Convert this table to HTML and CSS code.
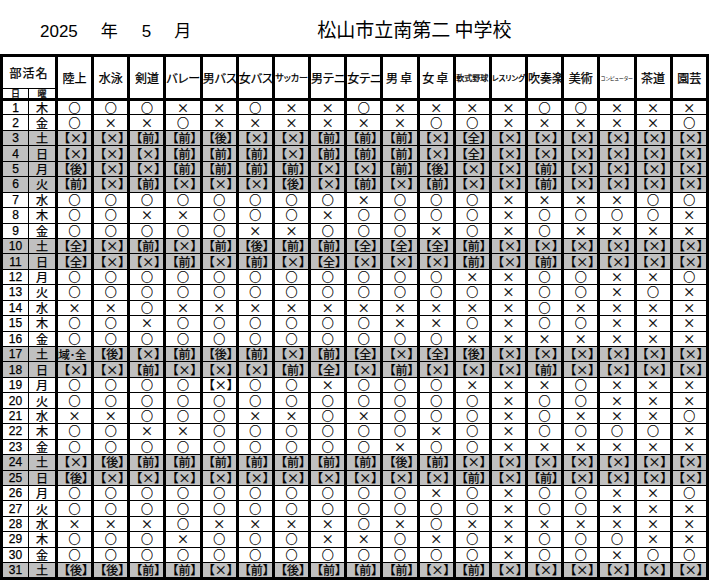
FILE: index.html
```html
<!DOCTYPE html>
<html lang="ja">
<head>
<meta charset="utf-8">
<title>2025年5月 部活動予定表</title>
<link rel="stylesheet" href="styles.css">
</head>
<body>
<div class="title">
  <span class="num">2025</span><span class="kan k1">年</span><span class="num n2">5</span><span class="kan k2">月</span><span class="school">松山市立南第二 中学校</span>
</div>
<table class="sched">
  <colgroup>
    <col class="cd"><col class="cw">
    <col><col><col><col><col><col><col><col><col><col><col><col><col><col><col><col><col><col>
  </colgroup>
  <thead>
    <tr class="h1">
      <th colspan="2" class="bk">部活名</th>
      <th rowspan="2" class="cl">陸上</th>
      <th rowspan="2" class="cl">水泳</th>
      <th rowspan="2" class="cl">剣道</th>
      <th rowspan="2" class="cl">バレー</th>
      <th rowspan="2" class="cl">男バス</th>
      <th rowspan="2" class="cl">女バス</th>
      <th rowspan="2" class="cl s9">サッカー</th>
      <th rowspan="2" class="cl">男テニ</th>
      <th rowspan="2" class="cl">女テニ</th>
      <th rowspan="2" class="cl sp">男卓</th>
      <th rowspan="2" class="cl sp">女卓</th>
      <th rowspan="2" class="cl s8">軟式野球</th>
      <th rowspan="2" class="cl s7">レスリング</th>
      <th rowspan="2" class="cl">吹奏楽</th>
      <th rowspan="2" class="cl">美術</th>
      <th rowspan="2" class="cl s5">コンピューター</th>
      <th rowspan="2" class="cl">茶道</th>
      <th rowspan="2" class="cl">園芸</th>
    </tr>
    <tr class="h2"><th class="sub">日</th><th class="sub">曜</th></tr>
  </thead>
  <tbody>
    <tr><td class="d">1</td><td class="w">木</td><td>○</td><td>○</td><td>○</td><td>×</td><td>×</td><td>○</td><td>×</td><td>×</td><td>○</td><td>×</td><td>×</td><td>×</td><td>×</td><td>○</td><td>○</td><td>×</td><td>×</td><td>×</td></tr>
    <tr><td class="d">2</td><td class="w">金</td><td>○</td><td>×</td><td>×</td><td>○</td><td>×</td><td>×</td><td>×</td><td>×</td><td>×</td><td>×</td><td>○</td><td>○</td><td>×</td><td>×</td><td>×</td><td>×</td><td>×</td><td>○</td></tr>
    <tr class="off"><td class="d">3</td><td class="w">土</td><td>【×】</td><td>【×】</td><td>【前】</td><td>【前】</td><td>【後】</td><td>【×】</td><td>【×】</td><td>【前】</td><td>【前】</td><td>【前】</td><td>【×】</td><td>【全】</td><td>【×】</td><td>【×】</td><td>【×】</td><td>【×】</td><td>【×】</td><td>【×】</td></tr>
    <tr class="off"><td class="d">4</td><td class="w">日</td><td>【×】</td><td>【×】</td><td>【×】</td><td>【前】</td><td>【前】</td><td>【前】</td><td>【×】</td><td>【前】</td><td>【前】</td><td>【前】</td><td>【×】</td><td>【全】</td><td>【×】</td><td>【×】</td><td>【×】</td><td>【×】</td><td>【×】</td><td>【×】</td></tr>
    <tr class="off"><td class="d">5</td><td class="w">月</td><td>【後】</td><td>【×】</td><td>【×】</td><td>【前】</td><td>【前】</td><td>【前】</td><td>【前】</td><td>【×】</td><td>【×】</td><td>【前】</td><td>【後】</td><td>【×】</td><td>【×】</td><td>【前】</td><td>【×】</td><td>【×】</td><td>【×】</td><td>【×】</td></tr>
    <tr class="off"><td class="d">6</td><td class="w">火</td><td>【前】</td><td>【×】</td><td>【前】</td><td>【×】</td><td>【×】</td><td>【×】</td><td>【後】</td><td>【×】</td><td>【前】</td><td>【×】</td><td>【前】</td><td>【×】</td><td>【×】</td><td>【前】</td><td>【×】</td><td>【×】</td><td>【×】</td><td>【×】</td></tr>
    <tr><td class="d">7</td><td class="w">水</td><td>○</td><td>○</td><td>○</td><td>○</td><td>○</td><td>○</td><td>○</td><td>○</td><td>×</td><td>○</td><td>○</td><td>○</td><td>×</td><td>×</td><td>×</td><td>×</td><td>○</td><td>○</td></tr>
    <tr><td class="d">8</td><td class="w">木</td><td>○</td><td>○</td><td>×</td><td>×</td><td>○</td><td>○</td><td>○</td><td>×</td><td>○</td><td>○</td><td>○</td><td>○</td><td>×</td><td>○</td><td>○</td><td>○</td><td>○</td><td>×</td></tr>
    <tr><td class="d">9</td><td class="w">金</td><td>○</td><td>○</td><td>○</td><td>○</td><td>○</td><td>×</td><td>×</td><td>○</td><td>○</td><td>○</td><td>×</td><td>○</td><td>×</td><td>○</td><td>×</td><td>×</td><td>×</td><td>×</td></tr>
    <tr class="off"><td class="d">10</td><td class="w">土</td><td>【全】</td><td>【×】</td><td>【前】</td><td>【×】</td><td>【前】</td><td>【後】</td><td>【前】</td><td>【前】</td><td>【全】</td><td>【全】</td><td>【全】</td><td>【前】</td><td>【×】</td><td>【×】</td><td>【×】</td><td>【×】</td><td>【×】</td><td>【×】</td></tr>
    <tr class="off"><td class="d">11</td><td class="w">日</td><td>【全】</td><td>【×】</td><td>【×】</td><td>【前】</td><td>【×】</td><td>【前】</td><td>【×】</td><td>【全】</td><td>【×】</td><td>【×】</td><td>【×】</td><td>【前】</td><td>【×】</td><td>【前】</td><td>【×】</td><td>【×】</td><td>【×】</td><td>【×】</td></tr>
    <tr><td class="d">12</td><td class="w">月</td><td>○</td><td>○</td><td>○</td><td>○</td><td>○</td><td>○</td><td>○</td><td>○</td><td>○</td><td>○</td><td>○</td><td>×</td><td>×</td><td>○</td><td>○</td><td>×</td><td>×</td><td>○</td></tr>
    <tr><td class="d">13</td><td class="w">火</td><td>○</td><td>○</td><td>○</td><td>○</td><td>○</td><td>○</td><td>○</td><td>○</td><td>○</td><td>○</td><td>○</td><td>○</td><td>×</td><td>○</td><td>○</td><td>×</td><td>○</td><td>×</td></tr>
    <tr><td class="d">14</td><td class="w">水</td><td>×</td><td>×</td><td>○</td><td>×</td><td>×</td><td>×</td><td>×</td><td>×</td><td>×</td><td>×</td><td>×</td><td>×</td><td>×</td><td>○</td><td>×</td><td>×</td><td>×</td><td>×</td></tr>
    <tr><td class="d">15</td><td class="w">木</td><td>○</td><td>○</td><td>×</td><td>○</td><td>○</td><td>○</td><td>○</td><td>○</td><td>○</td><td>×</td><td>×</td><td>○</td><td>×</td><td>○</td><td>○</td><td>×</td><td>×</td><td>×</td></tr>
    <tr><td class="d">16</td><td class="w">金</td><td>○</td><td>○</td><td>○</td><td>○</td><td>○</td><td>○</td><td>○</td><td>○</td><td>○</td><td>○</td><td>○</td><td>×</td><td>×</td><td>×</td><td>×</td><td>×</td><td>×</td><td>×</td></tr>
    <tr class="off"><td class="d">17</td><td class="w">土</td><td class="clip"><div>地域･全</div></td><td>【後】</td><td>【×】</td><td>【前】</td><td>【後】</td><td>【前】</td><td>【×】</td><td>【前】</td><td>【全】</td><td>【×】</td><td>【全】</td><td>【後】</td><td>【×】</td><td>【×】</td><td>【×】</td><td>【×】</td><td>【×】</td><td>【×】</td></tr>
    <tr class="off"><td class="d">18</td><td class="w">日</td><td>【×】</td><td>【×】</td><td>【前】</td><td>【×】</td><td>【×】</td><td>【×】</td><td>【前】</td><td>【全】</td><td>【×】</td><td>【前】</td><td>【×】</td><td>【×】</td><td>【×】</td><td>【前】</td><td>【×】</td><td>【×】</td><td>【×】</td><td>【×】</td></tr>
    <tr><td class="d">19</td><td class="w">月</td><td>○</td><td>○</td><td>○</td><td>○</td><td>【×】</td><td>○</td><td>○</td><td>×</td><td>○</td><td>○</td><td>○</td><td>×</td><td>×</td><td>×</td><td>○</td><td>×</td><td>×</td><td>×</td></tr>
    <tr><td class="d">20</td><td class="w">火</td><td>○</td><td>○</td><td>○</td><td>○</td><td>○</td><td>○</td><td>○</td><td>○</td><td>○</td><td>○</td><td>○</td><td>○</td><td>×</td><td>○</td><td>○</td><td>×</td><td>×</td><td>×</td></tr>
    <tr><td class="d">21</td><td class="w">水</td><td>×</td><td>×</td><td>○</td><td>○</td><td>○</td><td>×</td><td>×</td><td>○</td><td>×</td><td>○</td><td>○</td><td>○</td><td>×</td><td>○</td><td>×</td><td>×</td><td>×</td><td>○</td></tr>
    <tr><td class="d">22</td><td class="w">木</td><td>○</td><td>○</td><td>×</td><td>×</td><td>○</td><td>○</td><td>○</td><td>○</td><td>○</td><td>○</td><td>×</td><td>○</td><td>×</td><td>○</td><td>○</td><td>○</td><td>○</td><td>×</td></tr>
    <tr><td class="d">23</td><td class="w">金</td><td>○</td><td>○</td><td>○</td><td>○</td><td>○</td><td>○</td><td>○</td><td>○</td><td>○</td><td>×</td><td>○</td><td>○</td><td>×</td><td>×</td><td>×</td><td>×</td><td>×</td><td>×</td></tr>
    <tr class="off"><td class="d">24</td><td class="w">土</td><td>【×】</td><td>【後】</td><td>【前】</td><td>【前】</td><td>【前】</td><td>【前】</td><td>【前】</td><td>【前】</td><td>【前】</td><td>【後】</td><td>【前】</td><td>【×】</td><td>【×】</td><td>【×】</td><td>【×】</td><td>【×】</td><td>【×】</td><td>【×】</td></tr>
    <tr class="off"><td class="d">25</td><td class="w">日</td><td>【後】</td><td>【×】</td><td>【×】</td><td>【×】</td><td>【×】</td><td>【×】</td><td>【×】</td><td>【×】</td><td>【×】</td><td>【×】</td><td>【×】</td><td>【前】</td><td>【×】</td><td>【前】</td><td>【×】</td><td>【×】</td><td>【×】</td><td>【×】</td></tr>
    <tr><td class="d">26</td><td class="w">月</td><td>○</td><td>○</td><td>○</td><td>○</td><td>○</td><td>○</td><td>○</td><td>○</td><td>○</td><td>○</td><td>×</td><td>○</td><td>×</td><td>○</td><td>○</td><td>×</td><td>×</td><td>○</td></tr>
    <tr><td class="d">27</td><td class="w">火</td><td>○</td><td>○</td><td>○</td><td>○</td><td>○</td><td>○</td><td>○</td><td>○</td><td>○</td><td>○</td><td>○</td><td>○</td><td>×</td><td>○</td><td>○</td><td>×</td><td>×</td><td>×</td></tr>
    <tr><td class="d">28</td><td class="w">水</td><td>×</td><td>×</td><td>×</td><td>○</td><td>×</td><td>×</td><td>×</td><td>×</td><td>○</td><td>×</td><td>○</td><td>×</td><td>×</td><td>×</td><td>×</td><td>×</td><td>×</td><td>×</td></tr>
    <tr><td class="d">29</td><td class="w">木</td><td>○</td><td>○</td><td>○</td><td>×</td><td>○</td><td>○</td><td>○</td><td>×</td><td>×</td><td>○</td><td>×</td><td>○</td><td>×</td><td>○</td><td>○</td><td>○</td><td>×</td><td>×</td></tr>
    <tr><td class="d">30</td><td class="w">金</td><td>○</td><td>○</td><td>○</td><td>○</td><td>○</td><td>○</td><td>○</td><td>○</td><td>○</td><td>○</td><td>○</td><td>○</td><td>×</td><td>○</td><td>○</td><td>×</td><td>○</td><td>○</td></tr>
    <tr class="off"><td class="d">31</td><td class="w">土</td><td>【後】</td><td>【後】</td><td>【前】</td><td>【前】</td><td>【×】</td><td>【前】</td><td>【後】</td><td>【前】</td><td>【前】</td><td>【前】</td><td>【×】</td><td>【前】</td><td>【×】</td><td>【×】</td><td>【×】</td><td>【×】</td><td>【×】</td><td>【×】</td></tr>
  </tbody>
</table>
</body>
</html>
```
FILE: styles.css
```css
html, body {
  margin: 0;
  padding: 0;
  background: #fff;
}
body {
  font-family: "Noto Sans CJK JP", sans-serif;
  color: #000;
  width: 709px;
}

/* ---------- title ---------- */
.title {
  display: flex;
  align-items: baseline;
  height: 54px;
  box-sizing: border-box;
  padding-top: 19px;
  padding-left: 40px;
}
.title .num {
  font-family: "Liberation Sans", sans-serif;
  font-size: 17px;
  line-height: 17px;
}
.title .kan {
  font-size: 17px;
  line-height: 17px;
  margin-left: 23px;
}
.title .n2 {
  margin-left: 24px;
}
.title .school {
  font-size: 19px;
  line-height: 19px;
  margin-left: 126px;
}

/* ---------- table ---------- */
.sched {
  border-collapse: collapse;
  table-layout: fixed;
  width: 709px;
  border: 3px solid #000;
}
.sched col.cd { width: 27px; }
.sched col.cw { width: 28px; }

.sched th,
.sched td {
  padding: 0;
  text-align: center;
  vertical-align: middle;
  white-space: nowrap;
  overflow: hidden;
  border: 1px solid #000;
  font-weight: normal;
  -webkit-text-stroke: 0.25px #000;
}

.sched th {
  font-size: 12px;
  line-height: 12px;
}
.sched .h1 th { height: 31px; }
.sched .h2 th { height: 9px; border-bottom: 3px solid #000; }
.sched th.cl {
  border-left: 3px solid #000;
  border-right: 3px solid #000;
  border-bottom: 3px solid #000;
  font-feature-settings: "palt";
}
.sched th.bk { letter-spacing: 1px; }
.sched th.sub { font-size: 9px; line-height: 9px; }
.sched th.sp { letter-spacing: 2px; }
.sched th.s9 { font-size: 9px; }
.sched th.s8 { font-size: 8px; }
.sched th.s7 { font-size: 7.5px; }
.sched th.s5 { font-size: 5px; -webkit-text-stroke: 0; }

.sched tbody tr { height: 15.45px; }
.sched td {
  font-size: 12px;
  line-height: 12px;
  border-left: 3px solid #000;
  border-right: 3px solid #000;
}
.sched td.d {
  font-family: "Liberation Sans", sans-serif;
  font-size: 12px;
  border-right: 1px solid #000;
}
.sched td.w {
  font-size: 12px;
  border-left: 1px solid #000;
}
.sched tr.off td { background: #c0c0c0; }

.sched td.clip div {
  display: flex;
  justify-content: flex-end;
  padding-right: 5px;
  font-size: 11px;
  overflow: hidden;
}
```
